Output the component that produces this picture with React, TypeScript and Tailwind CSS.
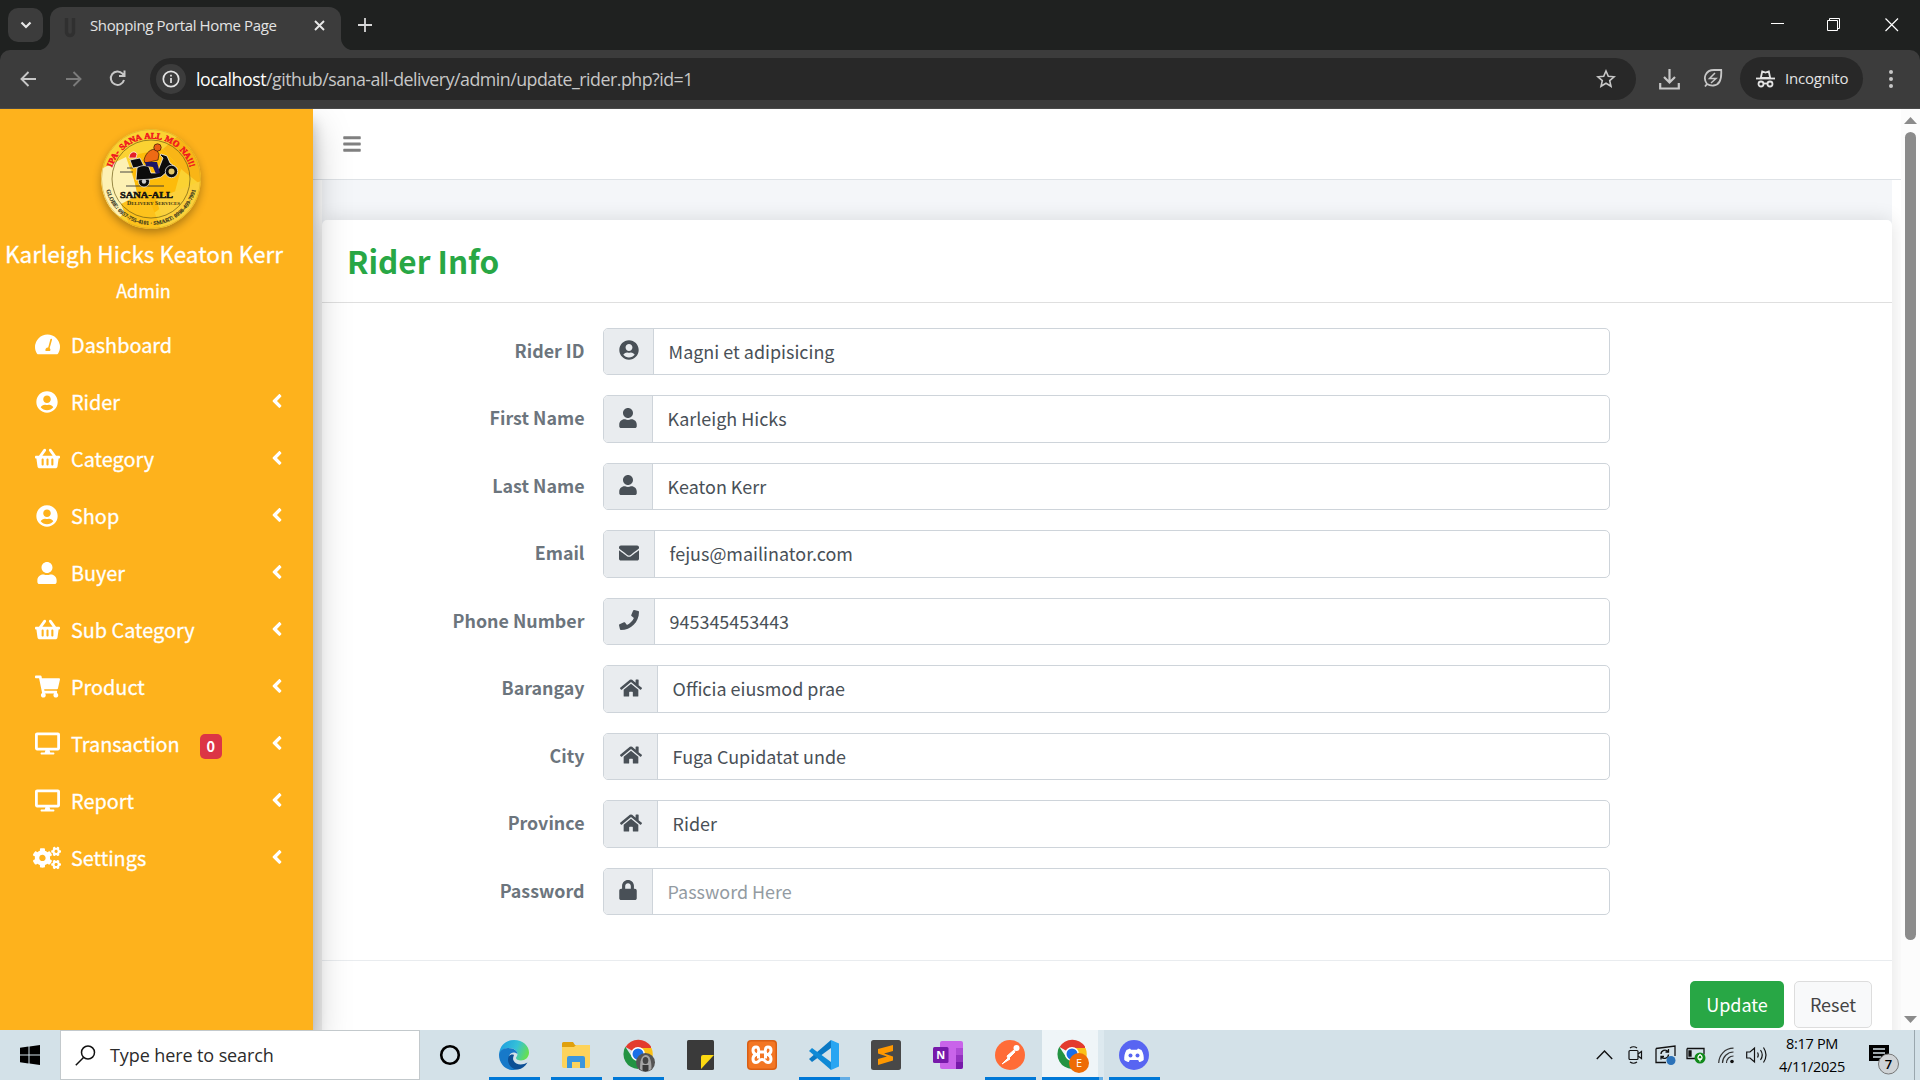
import React from "react";
import {
  FaUserCircle, FaShoppingBasket, FaUser, FaShoppingCart, FaDesktop,
  FaCogs, FaAngleLeft, FaBars, FaEnvelope, FaPhone, FaHome, FaLock,
} from "react-icons/fa";

const ui = "font-['Open_Sans','Noto_Sans',sans-serif]";
const src = "font-['Noto_Sans_CJK_SC',sans-serif]";

type Glyph = React.ComponentType<{ size?: number }>;

function Gauge({ size = 25 }: { size?: number }) {
  return (
    <svg width={size} height={size} viewBox="0 0 25 25" fill="#fff">
      <path fillRule="evenodd" d="M12.500 2.500A12.500 12.500 0 0 0 0 15c0 2.200.600 4.200 1.600 6 .400.900.900 1.300 1.800 1.300h18.200c.900 0 1.400-.400 1.800-1.300 1-1.800 1.600-3.800 1.600-6A12.500 12.500 0 0 0 12.500 2.500zm3.900 4.200a.8.8 0 0 1 .600 1l-2.300 8.300a2.600 2.600 0 0 1 .400 3H10.600a2.500 2.500 0 0 1 2.600-3.500l2.200-8.200a.8.8 0 0 1 1-.6z" />
    </svg>
  );
}

function Chrome() {
  return (
    <div className={`${ui} shrink-0`}>
      <div className="flex h-[50px] bg-[#1f2120]">
        <div className="ml-2 mt-2 flex h-[34px] w-[35px] items-center justify-center rounded-[10px] bg-[#3c3c3c]">
          <svg width="12" height="8" viewBox="0 0 12 8" fill="none" stroke="#e8e8e8" strokeWidth="2.2"><path d="M1.5 1.5 6 6l4.500-4.500" /></svg>
        </div>
        <svg width="14" height="50" viewBox="0 0 14 50" className="-ml-[7px] mr-0 w-[14px]"><path d="M14 38a12 12 0 0 1-14 12h14z" fill="#3c3c3c" /></svg>
        <div className="mt-[7px] flex h-[43px] w-[291px] items-center rounded-t-[12px] bg-[#3c3c3c]">
          <svg width="12" height="21" viewBox="0 0 12 21" className="ml-[14px] -mt-[2px]" fill="none" stroke="#303030" strokeWidth="3.500"><path d="M2.500 1v14a3.500 3.500 0 0 0 7 0V1" /></svg>
          <span className="ml-[14px] w-[224px] whitespace-nowrap text-[15px] tracking-[-0.36px] text-[#e3e3e3] -mt-[7px]">Shopping Portal Home Page</span>
          <svg width="11" height="11" viewBox="0 0 11 11" className="-mt-[7px]" stroke="#e8e8e8" strokeWidth="1.900"><path d="m1 1 9 9M10 1l-9 9" /></svg>
        </div>
        <svg width="14" height="50" viewBox="0 0 14 50"><path d="M0 38a12 12 0 0 0 14 12H0z" fill="#3c3c3c" /></svg>
        <svg width="14" height="14" viewBox="0 0 14 14" className="ml-[3px] mt-[18px]" stroke="#d8d8d8" strokeWidth="1.800"><path d="M7 0v14M0 7h14" /></svg>
        <div className="ml-auto flex">
          <svg width="13" height="14" viewBox="0 0 13 14" className="mr-[43px] mt-[17px]" stroke="#fff" strokeWidth="1"><path d="M0 6.500h13" /></svg>
          <svg width="14" height="14" viewBox="0 0 14 14" className="mr-[44px] mt-[18px]" fill="none" stroke="#fff" strokeWidth="1"><path d="M.5 2.500h10v10H.5zM2.500 2.500v-2h10v10h-2" /></svg>
          <svg width="14" height="14" viewBox="0 0 14 14" className="mr-[21px] mt-[18px]" stroke="#fff" strokeWidth="1.200"><path d="m.5.5 12.500 12.500M13 .5.5 13" /></svg>
        </div>
      </div>
      <div className="bg-[#1f2120]">
        <div className="flex h-[59px] items-start rounded-t-[10px] border-b border-[#4a4a4a] bg-[#3c3c3c] pt-2 pl-[20px]">
          <svg width="17" height="16" viewBox="0 0 17 16" className="mt-[13px]" fill="none" stroke="#c7c7c7" strokeWidth="1.900"><path d="M16 8H2M8.500 1 1.500 8l7 7" /></svg>
          <svg width="17" height="16" viewBox="0 0 17 16" className="mt-[13px] ml-[28px]" fill="none" stroke="#7b7b7b" strokeWidth="1.900"><path d="M1 8h14M8.500 1l7 7-7 7" /></svg>
          <svg width="17" height="17" viewBox="0 0 17 17" className="mt-[12px] ml-[27px]" fill="none" stroke="#c7c7c7" strokeWidth="2"><path d="M15 10a6.700 6.700 0 1 1-1.500-6.300L15.500 6M15.500.5V6H10" /></svg>
          <div className="ml-[24px] flex h-[42px] w-[1486px] items-center rounded-full bg-[#282828] pl-[6px]">
            <div className="flex h-[30px] w-[30px] items-center justify-center rounded-full bg-[#3c3c3c]">
              <svg width="18" height="18" viewBox="0 0 18 18" fill="none" stroke="#e3e3e3" strokeWidth="1.700"><circle cx="9" cy="9" r="7.700" /><path d="M9 8v5M9 4.700v1.800" /></svg>
            </div>
            <span className="ml-[10px] whitespace-nowrap text-[17.800px] tracking-[-0.5px] text-[#c7c7c7]"><span className="text-white">localhost</span>/github/sana-all-delivery/admin/update_rider.php?id=1</span>
            <svg width="20" height="20" viewBox="0 0 20 20" className="ml-auto mr-[20px]" fill="none" stroke="#c7c7c7" strokeWidth="1.600"><path d="m10 2 2.300 5.300 5.800.500-4.400 3.800 1.300 5.700-5-3-5 3 1.300-5.700L1.900 7.800l5.800-.500z" /></svg>
          </div>
          <svg width="21" height="21" viewBox="0 0 21 21" className="ml-[23px] mt-[11px]" fill="none" stroke="#c7c7c7" strokeWidth="2.200"><path d="M10.500 0v13M5 8l5.500 5.500L16 8M1.200 14v5.500h18.600V14" /></svg>
          <svg width="20" height="20" viewBox="0 0 20 20" className="ml-[23px] mt-[10px]" fill="none" stroke="#c7c7c7" strokeWidth="1.800"><path d="M2 18.500 4 16M4 16C-.5 10 2.500 2 11 2h7.200c.500 8-.700 15-7.700 15.500C7.500 17.700 5.500 17 4 16z" /><path d="m12 5-5.500 5.500h6.500L8 15" strokeWidth="1.500" /></svg>
          <div className="ml-[17px] -mt-px flex h-[43px] w-[123px] items-center rounded-full bg-[#282828] pl-[16px]">
            <svg width="19" height="18" viewBox="0 0 19 18" fill="none" stroke="#e3e3e3" strokeWidth="1.800"><path d="M0 8.500h19" /><path d="m4.800 8 1.400-6.500 3.300 1 3.300-1L14.200 8z" fill="none" /><circle cx="5" cy="14" r="2.500" /><circle cx="14" cy="14" r="2.500" /><path d="M7.500 13.500h4" /></svg>
            <span className="ml-[10px] text-[15px] tracking-[-0.2px] text-[#e3e3e3]">Incognito</span>
          </div>
          <svg width="6" height="20" viewBox="0 0 6 20" className="ml-[25px] mt-[11px]" fill="#c7c7c7"><circle cx="3" cy="3" r="2" /><circle cx="3" cy="10" r="2" /><circle cx="3" cy="17" r="2" /></svg>
        </div>
      </div>
    </div>
  );
}

function Logo() {
  return (
    <svg width="100" height="100" viewBox="0 0 100 100" className="rounded-full shadow-[0_4px_8px_rgba(0,0,0,0.3)]">
      <defs>
        <clipPath id="disc"><circle cx="50" cy="50" r="50" /></clipPath>
        <path id="arcTop" d="M9.500 50a40.500 40.500 0 0 1 81 0" />
        <path id="arcLow" d="M4 50a46 46 0 0 0 92 0" />
      </defs>
      <g clipPath="url(#disc)">
        <rect width="100" height="100" fill="#fbd232" />
        <path d="M0 40 25 28l14 40-20 20L0 75z" fill="#fdf1b4" />
        <path d="M28 27 62 20l18 20-8 30-30 22z" fill="#fdbb0a" />
        <path d="M62 20 78 6l22 20v30L80 40z" fill="#f9b516" />
        <path d="M20 75 45 62l15 38H30z" fill="#fdc21c" />
        <path d="m55 70 25-10 20-8-10 28-25 20z" fill="#fbd03c" />
      </g>
      <circle cx="50" cy="50" r="49.500" fill="none" stroke="#d3a52a" strokeWidth=".6" />
      <circle cx="50" cy="50" r="39" fill="none" stroke="#6b5a16" strokeWidth=".7" />
      <text fontFamily="Liberation Serif, serif" fontWeight="700" fontSize="8.600" wordSpacing="1.200" letterSpacing="-.1" fill="#f0141e" stroke="#f0141e" strokeWidth=".5"><textPath href="#arcTop" startOffset="50%" textAnchor="middle">IPA- SANA ALL MO NA!!!</textPath></text>
      <text fontFamily="Liberation Serif, serif" fontWeight="700" fontSize="5.700" fill="#37351d" stroke="#37351d" strokeWidth=".15"><textPath href="#arcLow" startOffset="50%" textAnchor="middle">GLOBE: 0957-755-4101 · SMART: 0998-499-7991</textPath></text>
      <g stroke="#333" strokeWidth=".9"><path d="M26 39h6M19 43h13M25 57h38" /></g>
      <g stroke="#fff" strokeWidth=".7" fill="#0c0c0c" strokeLinejoin="round">
        <circle cx="43" cy="52.500" r="5.500" />
        <path d="m29 31 10-2 4 8-11 2z" />
        <path d="M36 39c4-3 9-3 12-1l2 6h6l6-15-3-3 1-1 6 2 3 7 7 5-1 3-7-1-8 7-9 2-16 1z" />
        <circle cx="70.500" cy="42.500" r="6.200" />
      </g>
      <circle cx="70.500" cy="42.500" r="3" fill="#e2c869" /><circle cx="43" cy="52.500" r="2.200" fill="#cfcfcf" />
      <path d="M28 29c0-6 6-8 8-4l-1 4z" fill="#e41f26" stroke="#fff" strokeWidth=".7" />
      <path d="M43 31c2-8 7-11 12-11l3 5-1 6-13 3z" fill="#ee6a14" stroke="#3a1d05" strokeWidth=".7" />
      <circle cx="56.500" cy="18.500" r="3.700" fill="#e85f16" stroke="#3a1d05" strokeWidth=".7" />
      <path d="M44 33h12l3 11-4 1-3-7-7-1z" fill="#1c1667" />
      <text x="19" y="68.500" fontFamily="Liberation Serif, serif" fontWeight="700" fontSize="9.200" fill="#111" stroke="#111" strokeWidth=".5" textLength="53" lengthAdjust="spacingAndGlyphs">SANA-ALL</text>
      <text x="26" y="75.500" fontFamily="Liberation Serif, serif" fontWeight="700" fontSize="5.600" fill="#3c3210" textLength="53" lengthAdjust="spacingAndGlyphs">D<tspan fontSize="4.700">ELIVERY</tspan> S<tspan fontSize="4.700">ERVICES</tspan></text>
    </svg>
  );
}

const menu: { label: string; icon: Glyph; size: number; badge?: string; leaf?: boolean }[] = [
  { label: "Dashboard", icon: Gauge, size: 25, leaf: true },
  { label: "Rider", icon: FaUserCircle, size: 22 },
  { label: "Category", icon: FaShoppingBasket, size: 25 },
  { label: "Shop", icon: FaUserCircle, size: 22 },
  { label: "Buyer", icon: FaUser, size: 22 },
  { label: "Sub Category", icon: FaShoppingBasket, size: 25 },
  { label: "Product", icon: FaShoppingCart, size: 25 },
  { label: "Transaction", icon: FaDesktop, size: 25, badge: "0" },
  { label: "Report", icon: FaDesktop, size: 25 },
  { label: "Settings", icon: FaCogs, size: 28 },
];

function Sidebar() {
  return (
    <aside className={`${src} relative z-10 h-full w-[313px] shrink-0 overflow-visible bg-[#feb21c] text-white shadow-[0_18px_35px_rgba(0,0,0,0.25),0_13px_13px_rgba(0,0,0,0.22)]`}>
      <div className="flex flex-col pt-5 [-webkit-text-stroke:0.3px]">
        <div className="ml-[101px] h-[100px] [-webkit-text-stroke:0px]"><Logo /></div>
        <div className="ml-[5px] mt-[8px] h-[32px] whitespace-nowrap text-[22.500px] leading-[32px]">Karleigh Hicks Keaton Kerr</div>
        <div className="mt-[7px] h-[28px] w-[287px] text-center text-[18px] leading-[28px]">Admin</div>
      </div>
      <nav className="mt-[13px]">
        {menu.map(({ label, icon: Icon, size, badge, leaf }) => (
          <div key={label} className="flex h-[57px] items-center">
            <span className="ml-[31px] -mt-[2px] flex w-8 justify-center"><Icon size={size} /></span>
            <span className="ml-[8px] -mt-[2px] text-[19.850px] leading-[30px] [-webkit-text-stroke:0.3px]">{label}</span>
            {badge && <span className="ml-[20px] mt-[4px] flex h-[25px] w-[22px] items-center justify-center rounded-[5px] bg-[#dc3545] text-[14.500px] font-bold leading-none">{badge}</span>}
            {!leaf && <FaAngleLeft size={22} className="ml-auto mr-[25px] -mt-[4px]" />}
          </div>
        ))}
      </nav>
    </aside>
  );
}

const fields: { label: string; icon: Glyph; box: string; icw: number; value: string; muted?: boolean }[] = [
  { label: "Rider ID", icon: FaUserCircle, box: "w-[50px]", icw: 20, value: "Magni et adipisicing" },
  { label: "First Name", icon: FaUser, box: "w-[49px]", icw: 20, value: "Karleigh Hicks" },
  { label: "Last Name", icon: FaUser, box: "w-[49px]", icw: 20, value: "Keaton Kerr" },
  { label: "Email", icon: FaEnvelope, box: "w-[51px]", icw: 20, value: "fejus@mailinator.com" },
  { label: "Phone Number", icon: FaPhone, box: "w-[51px]", icw: 20, value: "945345453443" },
  { label: "Barangay", icon: FaHome, box: "w-[54px]", icw: 22, value: "Officia eiusmod prae" },
  { label: "City", icon: FaHome, box: "w-[54px]", icw: 22, value: "Fuga Cupidatat unde" },
  { label: "Province", icon: FaHome, box: "w-[54px]", icw: 22, value: "Rider" },
  { label: "Password", icon: FaLock, box: "w-[49px]", icw: 20, value: "Password Here", muted: true },
];

function Content() {
  return (
    <main className={`${src} flex h-full min-w-0 flex-1 flex-col overflow-hidden bg-white`}>
      <header className="flex h-[71px] shrink-0 items-center border-b border-[#dee2e6] pl-[29px] pb-px">
        <FaBars size={20} className="text-[#808080]" />
      </header>
      <div className="ml-[9px] mr-[9px] h-full bg-[#f4f6f9] pt-10">
        <section className="h-[900px] rounded-t-[5px] bg-white shadow-[0_0_20px_rgba(0,0,0,0.12)]">
          <div className="flex h-[83px] items-center border-b border-[#dfdfdf] pl-[25px] pb-[3px]">
            <h1 className="text-[31.500px] font-bold leading-[40px] text-[#28a745]">Rider Info</h1>
          </div>
          <div className="flex h-[658px] flex-col gap-[20px] border-b border-[#e9ecef] pt-[24.600px]">
            {fields.map(({ label, icon: Icon, box, icw, value, muted }) => (
              <div key={label} className="flex h-[47.500px] items-center">
                <div className="w-[262.500px] pb-[3px] text-right text-[17.850px] font-bold leading-[28px] text-[#6c757d]">{label}</div>
                <div className="ml-[18.500px] flex h-[47.500px] w-[1007px] overflow-hidden rounded-[5px] border border-[#ced4da]">
                  <div className={`${box} flex items-center justify-center border-r border-[#ced4da] bg-[#e9ecef] pb-[2px] text-[#495057]`}><Icon size={icw} /></div>
                  <div className={`flex items-center pl-[14.600px] text-[17.950px] ${muted ? "text-[#939ba2]" : "text-[#495057]"}`}>{value}</div>
                </div>
              </div>
            ))}
          </div>
          <div className="flex justify-end gap-[10px] pr-[20px] pt-[20px] text-[18px]">
            <div className="flex h-[47px] w-[94px] items-center justify-center rounded-[5px] bg-[#28a745] text-white">Update</div>
            <div className="flex h-[47px] w-[78px] items-center justify-center rounded-[5px] border border-[#ddd] bg-[#f8f9fa] text-[#444]">Reset</div>
          </div>
        </section>
      </div>
    </main>
  );
}

function Scrollbar() {
  return (
    <div className="flex h-full w-[19px] shrink-0 flex-col items-center bg-[#fcfcfc]">
      <svg width="13" height="7" viewBox="0 0 13 7" className="mt-[8px]" fill="#8b8b8b"><path d="M6.500 0 13 7H0z" /></svg>
      <div className="mt-[8px] h-[808px] w-[11px] rounded-full bg-[#8b8b8b]" />
      <svg width="13" height="7" viewBox="0 0 13 7" className="mt-[76px]" fill="#8b8b8b"><path d="M6.500 7 13 0H0z" /></svg>
    </div>
  );
}

const ChromeMark = ({ children }: { children?: React.ReactNode }) => (
  <svg width="34" height="34" viewBox="0 0 34 34" className="mt-[2px]">
    <path d="M15 15 2.500 8A15 15 0 0 1 28 7.500V10H15z" fill="#e33b2e" />
    <path d="M15 9h13.500A15 15 0 0 1 15 30l7-11z" fill="#fbc116" />
    <path d="M2.300 7.800A15 15 0 0 0 15 30l6-10-12-2z" fill="#229342" />
    <circle cx="15" cy="15" r="7" fill="#fff" /><circle cx="15" cy="15" r="5.500" fill="#1a6fe8" />
    {children}
  </svg>
);

const taskIcons: { key: string; bar?: string; active?: boolean; art: React.ReactNode }[] = [
  { key: "edge", bar: "w-[51px] bg-[#0078d7]", art: <svg width="30" height="30" viewBox="0 0 30 30">
      <defs><linearGradient id="eg" x1="0" x2="1" y1=".3" y2=".6"><stop offset="0" stopColor="#1f9fe0" /><stop offset=".55" stopColor="#35c1d8" /><stop offset="1" stopColor="#68e04c" /></linearGradient></defs>
      <path d="M0 14C1 5 7 0 15 0c9 0 15 6 15 12.500 0 5-4 8-8 8-3 0-5-1-5-2.500 0-1 1.500-2 1.500-4C18.500 11 15 8 10 8 5 8 1 11 0 14z" fill="url(#eg)" />
      <path d="M0 15c0-4 4-7 9-7 6 0 9.500 3 9.500 6-6-4-10 1-8 6 2 6 8 8 13 5-5 7-15 6.500-20 0C1 22 0 18 0 15z" fill="#1779c9" />
      <path d="M10 16c-3 5 1 14 9 13.500 4-.5 7-3 9.500-7-5 3-12 2.500-14-2-1-2 0-4 .500-5.500-2-1-4 0-5 1z" fill="#0c4f95" />
    </svg> },
  { key: "explorer", bar: "w-[51px] bg-[#0078d7]", art: <svg width="28" height="26" viewBox="0 0 28 26" className="ml-px"><path d="M0 1.500A1.500 1.500 0 0 1 1.500 0H11l2 3H28v4H0z" fill="#e0a00c" /><path d="M0 5h12l2-2h14v21a2 2 0 0 1-2 2H2a2 2 0 0 1-2-2z" fill="#fdd35b" /><path d="M5 26V16a2 2 0 0 1 2-2h14a2 2 0 0 1 2 2v10h-5v-6h-8v6z" fill="#3b96dd" /></svg> },
  { key: "chrome-a", bar: "w-[51px] bg-[#0078d7]", art: <ChromeMark><circle cx="22.500" cy="23.500" r="9.500" fill="#555" /><path d="M17 30c0-8 1-13 5.500-14 4.500 0 6 6 6 14l-3 2h-6z" fill="#a5a5a5" /><ellipse cx="22.500" cy="21.500" rx="2.800" ry="3.500" fill="#444" /><path d="M19.500 32v-6h6v6z" fill="#3a3a3a" /></ChromeMark> },
  { key: "sticky", art: <svg width="27" height="30" viewBox="0 0 27 30" className="ml-[2px]"><rect width="27" height="30" rx="1.500" fill="#3a3a3a" /><path d="M14 17a2 2 0 0 1 2-2h11L14 29z" fill="#fcd912" /></svg> },
  { key: "xampp", art: <svg width="30" height="30" viewBox="0 0 30 30"><rect width="30" height="30" rx="4" fill="#d95f14" /><rect x="1.500" y="1.500" width="27" height="27" rx="3" fill="#f37623" /><path d="M9 7c-4 0-4 6 0 7.500-4 1.500-4 8 0 8 3.500 0 2-3 6-3s2.500 3 6 3c4 0 4-6.500 0-8 4-1.500 4-7.500 0-7.500-4 0-1.500 4-3.500 5h-5c-2-1 .500-5-3.500-5zM11.500 11.500v7M18.500 11.500v7" fill="none" stroke="#fff" strokeWidth="3" /></svg> },
  { key: "vscode", bar: "w-[51px] bg-gradient-to-r from-[#0078d7] from-80% to-[#63ade5] to-80%", art: <svg width="30" height="30" viewBox="0 0 30 30"><path d="M22 0 0 19l3 3L22 8z" fill="#0b79c4" /><path d="M22 30 0 11l3-3 19 14z" fill="#0f8ad6" /><path d="m22 0 8 3.500v23L22 30z" fill="#28a5f2" /></svg> },
  { key: "sublime", art: <svg width="30" height="30" viewBox="0 0 30 30"><rect width="30" height="30" rx="2.500" fill="#484848" /><path d="m7 9 15-4v6l-9 2.500 9 3v4L7 25v-6l9-2.500-9-3z" fill="#ff9800" /></svg> },
  { key: "onenote", art: <svg width="30" height="30" viewBox="0 0 30 30"><rect x="7" y="1" width="23" height="28" rx="2" fill="#c964ea" /><path d="M23 8h7v7h-7z" fill="#ae4bd5" /><path d="M23 15h7v7h-7z" fill="#9332bf" /><path d="M23 22h7v5a2 2 0 0 1-2 2h-5z" fill="#7719aa" /><rect y="7" width="15.500" height="16" rx="1.500" fill="#7719aa" /><text x="7.800" y="19" fontFamily="Open Sans, sans-serif" fontWeight="700" fontSize="11" fill="#fff" textAnchor="middle">N</text></svg> },
  { key: "postman", bar: "w-[51px] bg-[#0078d7]", art: <svg width="30" height="30" viewBox="0 0 30 30"><circle cx="15" cy="15" r="15" fill="#ff6c37" /><circle cx="21.500" cy="8" r="3" fill="#fff" /><path d="m19 10-7 6 1 2-6 6 8-5-1-1 6-6z" fill="#fff" stroke="#fff" /></svg> },
  { key: "chrome-b", active: true, bar: "w-[61px] bg-gradient-to-r from-[#0078d7] from-93% to-[#63ade5] to-93%", art: <ChromeMark><circle cx="22" cy="24" r="10" fill="#ee6c05" /><text x="22" y="28" fontFamily="Open Sans, sans-serif" fontSize="11" fill="#fff" textAnchor="middle">E</text></ChromeMark> },
  { key: "discord", bar: "w-[51px] bg-[#0078d7]", art: <svg width="30" height="30" viewBox="0 0 30 30"><circle cx="15" cy="15" r="15" fill="#5865f2" /><path d="M11 8.500 7.500 10C5.500 13 5 17 5.300 20c2 1.500 3.500 2 4.500 2l1-2h8.400l1 2c1 0 2.500-.500 4.500-2 .300-3-.200-7-2.200-10L19 8.500l-1 1.300h-6z" fill="#fff" /><circle cx="11.500" cy="15.500" r="2" fill="#5865f2" /><circle cx="18.500" cy="15.500" r="2" fill="#5865f2" /></svg> },
];

function Taskbar() {
  return (
    <footer className={`${ui} flex h-[50px] shrink-0 bg-[#d3e1e8] text-black`}>
      <div className="flex w-[60px] items-center justify-center">
        <svg width="20" height="20" viewBox="0 0 20 20"><path d="M0 2.800 8.500 1.600v7.900H0zM9.500 1.400 20 0v9.500H9.500zM0 10.500h8.500v7.900L0 17.200zM9.500 10.500H20V20L9.500 18.600z" /></svg>
      </div>
      <div className="flex w-[360px] items-center border border-[#c3c9cc] bg-white pl-[14px]">
        <svg width="21" height="21" viewBox="0 0 21 21" fill="none" stroke="#111" strokeWidth="1.500"><circle cx="13" cy="7.500" r="6.500" /><path d="M8.500 12.500.8 20.300" /></svg>
        <span className="ml-[14px] text-[18px] tracking-[-0.100px] text-[#2b2b2b]">Type here to search</span>
      </div>
      <div className="flex w-[64px] items-center pl-[19px]">
        <svg width="22" height="22" viewBox="0 0 22 22"><circle cx="11" cy="11" r="8.800" fill="none" stroke="#000" strokeWidth="2.600" /></svg>
      </div>
      <div className="flex">
        {taskIcons.map(({ key, bar, active, art }) => (
          <div key={key} className={`flex h-[50px] w-[62px] flex-col ${active ? "bg-gradient-to-r from-[#eff5f8] from-91% to-[#dde9ef] to-91%" : ""}`}>
            <div className="flex h-[47px] items-center pl-[15px] pt-[3px]">{art}</div>
            {bar && <div className={`h-[3px] ${active ? "" : "ml-[5px]"} ${bar}`} />}
          </div>
        ))}
      </div>
      <div className="ml-auto flex items-center">
        <svg width="17" height="10" viewBox="0 0 17 10" fill="none" stroke="#111" strokeWidth="1.400"><path d="M.8 9 8.500 1l7.700 8" /></svg>
        <svg width="15" height="18" viewBox="0 0 15 18" className="ml-[15px]" fill="none" stroke="#111" strokeWidth="1.200"><rect x="1" y="4.500" width="9" height="9" rx="1" /><path d="m10 8 3.500-2.500v7L10 10M2 2Q5.500-.5 9 2M2 16q3.500 2.500 7 0" /></svg>
        <svg width="21" height="20" viewBox="0 0 21 20" className="ml-[12px]" fill="none" stroke="#111" strokeWidth="1.300"><path d="M1 3.500 20 1v10M1 3.500v14h10M6 9a4 4 0 0 1 7-2.500M13.500 4v3h-3M13.500 9.500a4 4 0 0 1-7 2.500M6 14.500v-3h3" /><circle cx="16" cy="15.500" r="4.500" fill="#2b72b9" stroke="none" /></svg>
        <svg width="20" height="18" viewBox="0 0 20 18" className="ml-[10px]" fill="none" stroke="#111" strokeWidth="1.300"><path d="M1 2.500h17v6M1 2.500v10h8" /><path d="M3 5h2v5H3z" fill="#111" /><circle cx="14" cy="12" r="5.500" fill="#108a1a" stroke="none" /><path d="M14 8.500c3 2 2.500 5 0 5.500-2.500-.5-3-3.500 0-5.500zM14 12v3.500" stroke="#fff" /></svg>
        <svg width="17" height="17" viewBox="0 0 17 17" className="ml-[12px]" fill="none" stroke="#333" strokeWidth="1.200"><path d="M.7 16C1 8 7 1.200 15.500 1.200M4.500 16c0-6 5-11 11-11M8.500 16c0-4 3-7 7-7" /><circle cx="14" cy="14.500" r="1.800" fill="#111" stroke="none" /></svg>
        <svg width="21" height="18" viewBox="0 0 21 18" className="ml-[11px]" fill="none" stroke="#111" strokeWidth="1.200"><path d="M.7 6v6H4l4.500 4V2L4 6zM11.500 6.500q1.500 2.500 0 5M14.500 4q3.500 5 0 10M17.500 1.500q5 7.500 0 15" /></svg>
        <div className="ml-[6px] flex w-[78px] flex-col items-center whitespace-nowrap text-[14.500px] leading-[23px] tracking-[-0.3px]"><span>8:17 PM</span><span>4/11/2025</span></div>
        <svg width="30" height="31" viewBox="0 0 30 31" className="ml-[18px] mt-[8px]"><path d="M0 1h20v16H5.500L0 17z" /><path d="M4 5h12M4 9h12M4 13h8" stroke="#d3e1e8" strokeWidth="1.300" /><circle cx="19.500" cy="20" r="10" fill="#cfd3d6" stroke="#777" /><text x="19.500" y="25" textAnchor="middle" fontSize="13" fontFamily="Open Sans, sans-serif" fontWeight="600">7</text></svg>
        <div className="ml-[15px] mr-[5px] h-[50px] w-px bg-[#9aa7ae]" />
      </div>
    </footer>
  );
}

export default function App() {
  return (
    <div className="flex h-[1080px] w-[1920px] flex-col overflow-hidden bg-white">
      <Chrome />
      <div className="flex h-[921px] overflow-hidden">
        <Sidebar />
        <Content />
        <Scrollbar />
      </div>
      <Taskbar />
    </div>
  );
}
